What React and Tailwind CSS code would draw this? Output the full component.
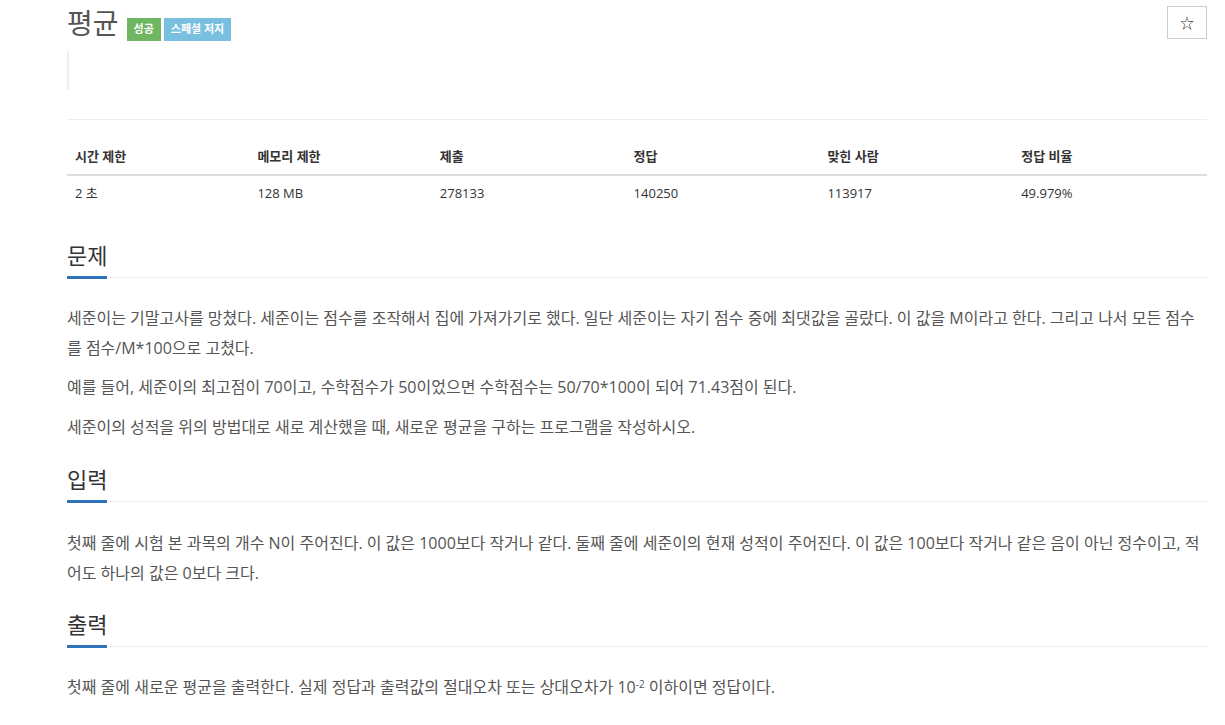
const info = {
  heads: ['시간 제한', '메모리 제한', '제출', '정답', '맞힌 사람', '정답 비율'],
  values: ['2 초', '128 MB', '278133', '140250', '113917', '49.979%'],
  widths: ['w-[16%]', 'w-[16%]', 'w-[17%]', 'w-[17%]', 'w-[17%]', 'w-[17%]'],
}

function Headline({ children }) {
  return (
    <div className="border-b border-dotted border-[#dde1e6]">
      <h2 className="inline-block -mb-[2px] pb-[9px] border-b-[3px] border-[#3173b8] text-[22px] leading-[24px] text-[#333]">
        {children}
      </h2>
    </div>
  )
}

export default function App() {
  return (
    <div
      className="bg-white min-h-[725px] text-[#555]"
      style={{ fontFamily: '"Open Sans", "Noto Sans CJK KR", sans-serif' }}
    >
      <div className="ml-[67px] w-[1140px] pt-[6px]">
        {/* Title row */}
        <div className="flex items-start justify-between">
          <div className="flex items-end gap-[8px]">
            <h1 className="text-[28px] leading-[34px] text-[#555]">평균</h1>
            <div className="flex gap-[3px] mb-[-1px]">
              <span className="h-[23px] px-[7px] flex items-center bg-[#6eb662] text-white text-[11px] font-bold">성공</span>
              <span className="h-[23px] px-[7px] flex items-center bg-[#78bfe0] text-white text-[11px] font-bold">스페셜 저지</span>
            </div>
          </div>
          <button className="w-[40px] h-[33px] border border-[#ccc] bg-white flex items-center justify-center text-[14px] text-[#333]">
            ☆
          </button>
        </div>

        {/* Blockquote */}
        <div className="mt-[11px] h-[39px] border-l-[2px] border-[#eee]" />

        <div className="mt-[29px] border-t border-[#eee]" />

        {/* Problem info table */}
        <table className="mt-[19px] w-full border-collapse text-[13px]">
          <thead>
            <tr>
              {info.heads.map((h, i) => (
                <th key={h} className={`${info.widths[i]} text-left font-bold text-[#333] px-[8px] py-[8px] leading-[19px] border-b-2 border-[#ddd]`}>
                  {h}
                </th>
              ))}
            </tr>
          </thead>
          <tbody>
            <tr>
              {info.values.map((v) => (
                <td key={v} className="px-[8px] py-[8px] leading-[19px] text-[#333]">{v}</td>
              ))}
            </tr>
          </tbody>
        </table>

        {/* 문제 */}
        <section className="mt-[32px]">
          <Headline>문제</Headline>
          <div className="mt-[26px] text-[16px] leading-[29.5px]">
            <p className="mb-[10px]">
              세준이는 기말고사를 망쳤다. 세준이는 점수를 조작해서 집에 가져가기로 했다. 일단 세준이는 자기 점수 중에 최댓값을 골랐다. 이 값을 M이라고 한다. 그리고 나서 모든 점수를 점수/M*100으로 고쳤다.
            </p>
            <p className="mb-[10px]">
              예를 들어, 세준이의 최고점이 70이고, 수학점수가 50이었으면 수학점수는 50/70*100이 되어 71.43점이 된다.
            </p>
            <p className="mb-[10px]">
              세준이의 성적을 위의 방법대로 새로 계산했을 때, 새로운 평균을 구하는 프로그램을 작성하시오.
            </p>
          </div>
        </section>

        {/* 입력 */}
        <section className="mt-[25px]">
          <Headline>입력</Headline>
          <div className="mt-[27px] text-[16px] leading-[29.5px]">
            <p className="mb-[10px]">
              첫째 줄에 시험 본 과목의 개수 N이 주어진다. 이 값은 1000보다 작거나 같다. 둘째 줄에 세준이의 현재 성적이 주어진다. 이 값은 100보다 작거나 같은 음이 아닌 정수이고, 적어도 하나의 값은 0보다 크다.
            </p>
          </div>
        </section>

        {/* 출력 */}
        <section className="mt-[24px]">
          <Headline>출력</Headline>
          <div className="mt-[26px] text-[16px] leading-[29.5px]">
            <p className="mb-[10px]">
              첫째 줄에 새로운 평균을 출력한다. 실제 정답과 출력값의 절대오차 또는 상대오차가 10<sup className="text-[10px]">-2</sup> 이하이면 정답이다.
            </p>
          </div>
        </section>
      </div>
    </div>
  )
}
